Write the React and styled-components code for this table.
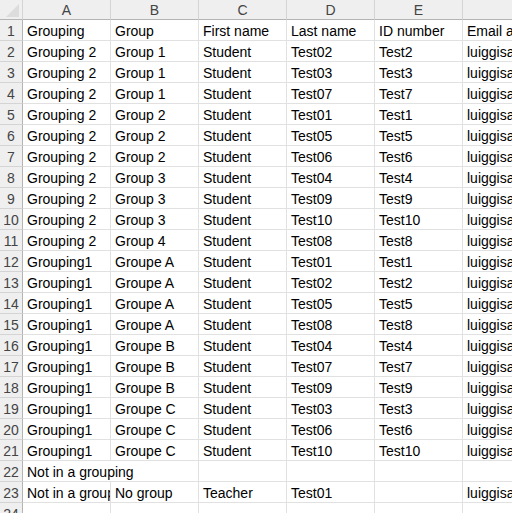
import React from 'react';
import styled, { createGlobalStyle } from 'styled-components';

const GlobalStyle = createGlobalStyle`
  html, body {
    margin: 0;
    padding: 0;
    background: #ffffff;
    overflow: hidden;
  }
  * {
    box-sizing: border-box;
  }
`;

const columns = ['A', 'B', 'C', 'D', 'E', 'F'];

const rows = [
  ['Grouping', 'Group', 'First name', 'Last name', 'ID number', 'Email address'],
  ['Grouping 2', 'Group 1', 'Student', 'Test02', 'Test2', 'luiggisa'],
  ['Grouping 2', 'Group 1', 'Student', 'Test03', 'Test3', 'luiggisa'],
  ['Grouping 2', 'Group 1', 'Student', 'Test07', 'Test7', 'luiggisa'],
  ['Grouping 2', 'Group 2', 'Student', 'Test01', 'Test1', 'luiggisa'],
  ['Grouping 2', 'Group 2', 'Student', 'Test05', 'Test5', 'luiggisa'],
  ['Grouping 2', 'Group 2', 'Student', 'Test06', 'Test6', 'luiggisa'],
  ['Grouping 2', 'Group 3', 'Student', 'Test04', 'Test4', 'luiggisa'],
  ['Grouping 2', 'Group 3', 'Student', 'Test09', 'Test9', 'luiggisa'],
  ['Grouping 2', 'Group 3', 'Student', 'Test10', 'Test10', 'luiggisa'],
  ['Grouping 2', 'Group 4', 'Student', 'Test08', 'Test8', 'luiggisa'],
  ['Grouping1', 'Groupe A', 'Student', 'Test01', 'Test1', 'luiggisa'],
  ['Grouping1', 'Groupe A', 'Student', 'Test02', 'Test2', 'luiggisa'],
  ['Grouping1', 'Groupe A', 'Student', 'Test05', 'Test5', 'luiggisa'],
  ['Grouping1', 'Groupe A', 'Student', 'Test08', 'Test8', 'luiggisa'],
  ['Grouping1', 'Groupe B', 'Student', 'Test04', 'Test4', 'luiggisa'],
  ['Grouping1', 'Groupe B', 'Student', 'Test07', 'Test7', 'luiggisa'],
  ['Grouping1', 'Groupe B', 'Student', 'Test09', 'Test9', 'luiggisa'],
  ['Grouping1', 'Groupe C', 'Student', 'Test03', 'Test3', 'luiggisa'],
  ['Grouping1', 'Groupe C', 'Student', 'Test06', 'Test6', 'luiggisa'],
  ['Grouping1', 'Groupe C', 'Student', 'Test10', 'Test10', 'luiggisa'],
  ['Not in a grouping', null, '', '', '', ''],
  ['Not in a grouping', 'No group', 'Teacher', 'Test01', '', 'luiggisa'],
  ['', '', '', '', '', ''],
];

function App() {
  return (
    <>
      <GlobalStyle />
      <Sheet>
        <Corner>
          <CornerMark />
        </Corner>
        {columns.map((col) => (
          <ColHeader key={col}>{col}</ColHeader>
        ))}
        {rows.map((row, r) => (
          <React.Fragment key={r}>
            <RowHeader>{r + 1}</RowHeader>
            {row.map((value, c) =>
              value === null ? null : (
                <Cell key={c} $span={row[c + 1] === null ? 2 : 1}>
                  {value}
                </Cell>
              )
            )}
          </React.Fragment>
        ))}
      </Sheet>
    </>
  );
}

export default App;

const Sheet = styled.div`
  display: grid;
  grid-template-columns: 23px repeat(5, 88px) 120px;
  grid-template-rows: 20px;
  grid-auto-rows: 21px;
  width: 583px;
  font-family: 'Liberation Sans', Arial, sans-serif;
  font-size: 14px;
  color: #000000;
`;

const Corner = styled.div`
  position: relative;
  background: #efefef;
  border-right: 1px solid #d4d4d4;
  border-bottom: 1px solid #b4b4b4;
`;

const CornerMark = styled.div`
  position: absolute;
  right: 3px;
  bottom: 2px;
  width: 0;
  height: 0;
  border-left: 13px solid transparent;
  border-bottom: 13px solid #dcdcdc;
`;

const ColHeader = styled.div`
  display: flex;
  align-items: center;
  justify-content: center;
  padding-top: 1px;
  background: #efefef;
  color: #444444;
  border-right: 1px solid #d4d4d4;
  border-bottom: 1px solid #b4b4b4;
`;

const RowHeader = styled.div`
  display: flex;
  align-items: center;
  justify-content: center;
  padding-top: 2px;
  background: #efefef;
  color: #444444;
  border-right: 1px solid #b4b4b4;
  border-bottom: 1px solid #d4d4d4;
`;

const Cell = styled.div`
  grid-column: span ${(p) => p.$span};
  display: flex;
  align-items: center;
  padding: 2px 3px 0 4px;
  white-space: nowrap;
  overflow: hidden;
  border-right: 1px solid #e1e1e1;
  border-bottom: 1px solid #e1e1e1;
`;
